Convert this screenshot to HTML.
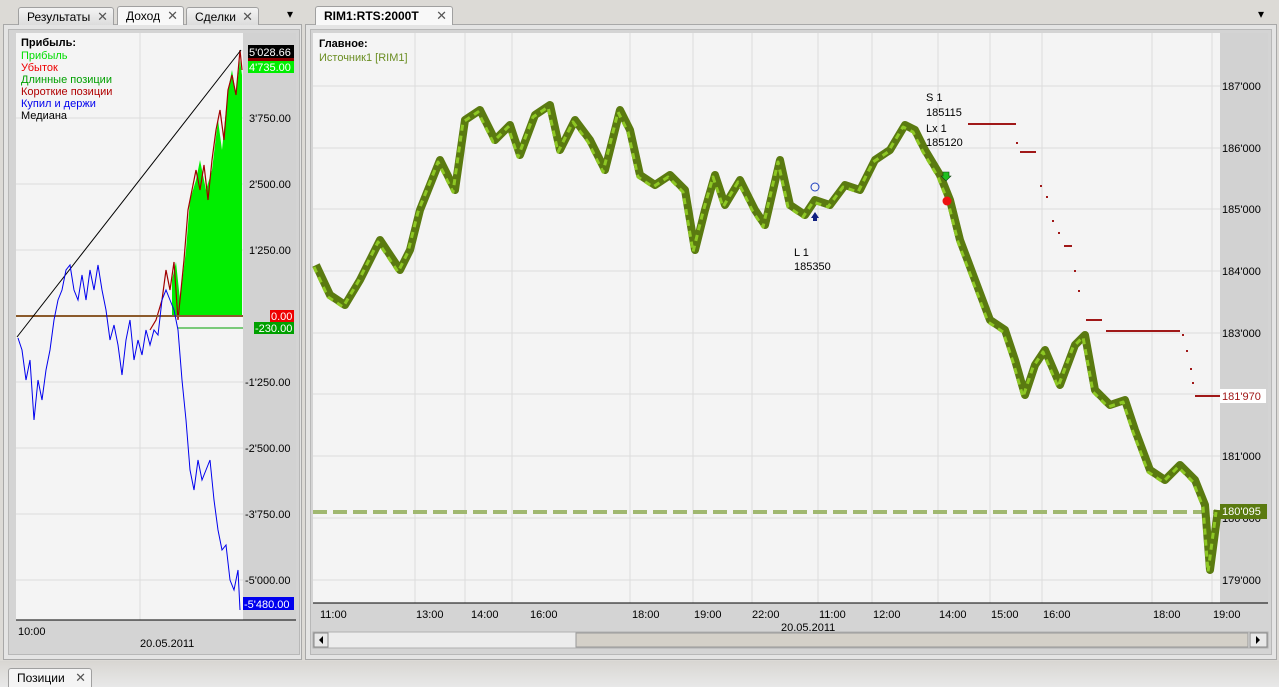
<!DOCTYPE html><html><head><meta charset="utf-8"><style>
body{margin:0;width:1279px;height:687px;background:#dcdad6;font-family:"Liberation Sans",sans-serif;font-size:11px;position:relative;overflow:hidden}
.abs{position:absolute}
.tab{position:absolute;height:18px;border:1px solid #a0a0a0;border-bottom:none;background:linear-gradient(#f4f4f4,#dcdcdc);border-radius:3px 3px 0 0;font-size:12px;line-height:18px;padding-left:8px;box-sizing:border-box}
.x{position:absolute;right:5px;top:0;font-size:13px;color:#555}
.lbl{position:absolute;font-size:11px;color:#000;white-space:nowrap}
</style></head><body>
<div class="abs" style="left:3px;top:24px;width:297px;height:634px;border:1px solid #a8a8a8;background:#e4e4e4"></div>
<div class="abs" style="left:8px;top:29px;width:290px;height:624px;border:1px solid #b8b8b8;background:#d4d4d4"></div>
<div class="tab" style="left:18px;top:7px;width:96px">Результаты<span class="x">✕</span></div>
<div class="tab" style="left:117px;top:6px;width:67px;height:19px;background:#f8f8f8">Доход<span class="x">✕</span></div>
<div class="tab" style="left:186px;top:7px;width:73px">Сделки<span class="x">✕</span></div>
<div class="lbl" style="left:287px;top:7px;font-size:12px">▾</div>
<div class="abs" style="left:305px;top:24px;width:970px;height:634px;border:1px solid #a8a8a8;background:#e4e4e4"></div>
<div class="abs" style="left:310px;top:29px;width:960px;height:624px;border:1px solid #b8b8b8;background:#d4d4d4"></div>
<div class="tab" style="left:315px;top:6px;width:138px;height:19px;background:#f8f8f8;font-weight:bold">RIM1:RTS:2000T<span class="x" style="font-weight:normal">✕</span></div>
<div class="lbl" style="left:1258px;top:7px;font-size:12px">▾</div>
<div class="abs" style="left:0;top:661px;width:1279px;height:26px;background:linear-gradient(#d8d6d2,#e8e8e8)"></div>
<div class="tab" style="left:8px;top:668px;width:84px;height:19px;background:#f4f4f4">Позиции<span class="x">✕</span></div>

<svg class="abs" style="left:0;top:0" width="1279" height="687">
<rect x="16" y="33" width="227" height="587" fill="#f4f4f4"/>
<rect x="243" y="33" width="53" height="587" fill="#d2d2d2"/>
<g stroke="#dcdcdc" stroke-width="1">
<line x1="140" y1="33" x2="140" y2="620"/>
<line x1="16" y1="118" x2="243" y2="118"/><line x1="16" y1="184" x2="243" y2="184"/><line x1="16" y1="250" x2="243" y2="250"/><line x1="16" y1="382" x2="243" y2="382"/><line x1="16" y1="448" x2="243" y2="448"/><line x1="16" y1="514" x2="243" y2="514"/><line x1="16" y1="580" x2="243" y2="580"/>
</g>
<line x1="16" y1="620" x2="296" y2="620" stroke="#000"/>
<polygon points="172,316 172,280 176,262 180,300 186,250 190,200 196,180 200,160 206,190 212,170 218,120 222,150 228,90 232,70 236,95 240,60 242,75 242,316" fill="#00ee00"/>
<polyline points="150,330 156,320 162,300 166,270 170,290 174,262 178,320 184,260 188,210 192,190 196,170 200,190 204,165 208,200 212,160 216,130 220,110 224,140 228,90 232,75 236,95 240,50 242,70" fill="none" stroke="#a00000" stroke-width="1.2"/>
<line x1="16" y1="316" x2="243" y2="316" stroke="#8b5a2b" stroke-width="2"/>
<line x1="178" y1="328" x2="243" y2="328" stroke="#00a000" stroke-width="1"/>
<line x1="17" y1="337" x2="241" y2="50" stroke="#000" stroke-width="1"/>
<polyline points="18,338 22,350 26,380 30,360 34,420 38,380 42,400 46,370 50,350 54,320 58,300 62,290 66,270 70,265 74,290 78,300 82,275 86,300 90,270 94,290 98,265 102,290 106,310 110,340 114,325 118,345 122,375 126,340 130,320 134,360 138,340 142,355 146,330 150,345 154,330 158,335 162,300 166,290 170,300 174,310 178,330 182,380 186,420 190,470 194,490 198,460 202,480 206,470 210,460 214,500 218,530 222,550 226,545 230,580 234,590 238,570 240,610" fill="none" stroke="#0000ee" stroke-width="1"/>
<g font-family="Liberation Sans" font-size="11">
<text x="21" y="46" font-weight="bold">Прибыль:</text>
<text x="21" y="59" fill="#00dd00">Прибыль</text>
<text x="21" y="71" fill="#ee0000">Убыток</text>
<text x="21" y="83" fill="#00a000">Длинные позиции</text>
<text x="21" y="95" fill="#b00000">Короткие позиции</text>
<text x="21" y="107" fill="#0000ee">Купил и держи</text>
<text x="21" y="119">Медиана</text>
<rect x="248" y="45" width="46" height="13" fill="#000"/><text x="249" y="56" fill="#fff">5'028.66</text>
<rect x="248" y="58" width="46" height="3" fill="#8b0000"/>
<rect x="248" y="61" width="46" height="12" fill="#00ee00"/><text x="249" y="71" fill="#fff">4'735.00</text>
<text x="249" y="122">3'750.00</text>
<text x="249" y="188">2'500.00</text>
<text x="249" y="254">1'250.00</text>
<rect x="270" y="310" width="24" height="12" fill="#ee0000"/><text x="271" y="320" fill="#fff">0.00</text>
<rect x="254" y="322" width="40" height="12" fill="#00a000"/><text x="255" y="332" fill="#fff">-230.00</text>
<text x="245" y="386">-1'250.00</text>
<text x="245" y="452">-2'500.00</text>
<text x="245" y="518">-3'750.00</text>
<text x="245" y="584">-5'000.00</text>
<rect x="243" y="597" width="51" height="13" fill="#0000ee"/><text x="244" y="608" fill="#fff">-5'480.00</text>
<text x="18" y="635">10:00</text>
<text x="140" y="647">20.05.2011</text>
</g>
<rect x="313" y="33" width="907" height="570" fill="#f4f4f4"/>
<rect x="1220" y="33" width="48" height="570" fill="#d2d2d2"/>
<g stroke="#dcdcdc" stroke-width="1">
<line x1="313" y1="86" x2="1220" y2="86"/><line x1="313" y1="148" x2="1220" y2="148"/><line x1="313" y1="209" x2="1220" y2="209"/><line x1="313" y1="271" x2="1220" y2="271"/><line x1="313" y1="333" x2="1220" y2="333"/><line x1="313" y1="394" x2="1220" y2="394"/><line x1="313" y1="456" x2="1220" y2="456"/><line x1="313" y1="518" x2="1220" y2="518"/><line x1="313" y1="580" x2="1220" y2="580"/>
<line x1="415" y1="33" x2="415" y2="603"/><line x1="465" y1="33" x2="465" y2="603"/><line x1="512" y1="33" x2="512" y2="603"/><line x1="630" y1="33" x2="630" y2="603"/><line x1="693" y1="33" x2="693" y2="603"/><line x1="752" y1="33" x2="752" y2="603"/><line x1="818" y1="33" x2="818" y2="603"/><line x1="872" y1="33" x2="872" y2="603"/><line x1="938" y1="33" x2="938" y2="603"/><line x1="990" y1="33" x2="990" y2="603"/><line x1="1042" y1="33" x2="1042" y2="603"/><line x1="1152" y1="33" x2="1152" y2="603"/><line x1="1212" y1="33" x2="1212" y2="603"/>
</g>
<line x1="313" y1="603" x2="1268" y2="603" stroke="#000"/>
<line x1="313" y1="512" x2="1220" y2="512" stroke="#a0b870" stroke-width="4" stroke-dasharray="14,6"/>
<polyline points="316,265 330,295 345,305 360,280 380,240 400,270 410,250 420,210 440,160 455,190 465,120 480,110 495,140 510,125 520,155 535,115 550,105 560,150 575,120 590,140 605,170 620,110 630,130 640,175 655,185 670,175 685,190 695,250 705,210 715,175 725,205 740,180 755,210 765,225 780,160 790,205 805,215 815,200 830,205 845,185 860,190 875,160 890,150 905,125 915,130 925,150 940,175 950,200 960,240 975,280 990,320 1005,330 1015,360 1025,395 1035,365 1045,350 1060,385 1075,345 1085,335 1095,390 1110,405 1125,400 1135,430 1150,470 1165,480 1180,465 1195,480 1205,505 1210,570 1218,510" fill="none" stroke="#5a7a10" stroke-width="8" stroke-linejoin="round"/>
<polyline transform="translate(-2,2)" points="316,265 330,295 345,305 360,280 380,240 400,270 410,250 420,210 440,160 455,190 465,120 480,110 495,140 510,125 520,155 535,115 550,105 560,150 575,120 590,140 605,170 620,110 630,130 640,175 655,185 670,175 685,190 695,250 705,210 715,175 725,205 740,180 755,210 765,225 780,160 790,205 805,215 815,200 830,205 845,185 860,190 875,160 890,150 905,125 915,130 925,150 940,175 950,200 960,240 975,280 990,320 1005,330 1015,360 1025,395 1035,365 1045,350 1060,385 1075,345 1085,335 1095,390 1110,405 1125,400 1135,430 1150,470 1165,480 1180,465 1195,480 1205,505 1210,570 1218,510" fill="none" stroke="#8ec824" stroke-width="3" stroke-dasharray="6,5" stroke-linejoin="round"/>
<g stroke="#a01818" stroke-width="2">
<line x1="968" y1="124" x2="1016" y2="124"/><line x1="1020" y1="152" x2="1036" y2="152"/><line x1="1064" y1="246" x2="1072" y2="246"/><line x1="1086" y1="320" x2="1102" y2="320"/><line x1="1106" y1="331" x2="1180" y2="331"/><line x1="1195" y1="396" x2="1220" y2="396"/>
</g>
<g fill="#a01818"><rect x="1016" y="142" width="2" height="2"/><rect x="1040" y="185" width="2" height="2"/><rect x="1046" y="196" width="2" height="2"/><rect x="1052" y="220" width="2" height="2"/><rect x="1058" y="232" width="2" height="2"/><rect x="1074" y="270" width="2" height="2"/><rect x="1078" y="290" width="2" height="2"/><rect x="1182" y="334" width="2" height="2"/><rect x="1186" y="350" width="2" height="2"/><rect x="1190" y="368" width="2" height="2"/><rect x="1192" y="382" width="2" height="2"/></g>
<circle cx="815" cy="187" r="4" fill="none" stroke="#2040c0"/>
<polygon points="811,218 815,212 819,218 817,218 817,221 813,221 813,218" fill="#102080"/>
<polygon points="943,172 949,172 949,176 951,176 946,181 941,176 943,176" fill="#20c020" stroke="#104010" stroke-width="0.6"/>
<circle cx="947" cy="201" r="4.5" fill="#ee1010"/>
<g font-family="Liberation Sans" font-size="11">
<text x="319" y="47" font-weight="bold">Главное:</text>
<text x="319" y="61" fill="#6b8e23">Источник1 [RIM1]</text>
<text x="794" y="256">L 1</text><text x="794" y="270">185350</text>
<text x="926" y="101">S 1</text><text x="926" y="116">185115</text>
<text x="926" y="132">Lx 1</text><text x="926" y="146">185120</text>
<text x="1222" y="90">187'000</text><text x="1222" y="152">186'000</text><text x="1222" y="213">185'000</text><text x="1222" y="275">184'000</text><text x="1222" y="337">183'000</text>
<rect x="1220" y="389" width="46" height="14" fill="#fff"/><text x="1222" y="400" fill="#a01818">181'970</text>
<text x="1222" y="460">181'000</text><text x="1222" y="522">180'000</text><text x="1222" y="584">179'000</text>
<rect x="1220" y="504" width="47" height="15" fill="#5a7a10"/><text x="1222" y="515" fill="#fff">180'095</text>
<text x="320" y="618">11:00</text><text x="416" y="618">13:00</text><text x="471" y="618">14:00</text><text x="530" y="618">16:00</text><text x="632" y="618">18:00</text><text x="694" y="618">19:00</text><text x="752" y="618">22:00</text><text x="819" y="618">11:00</text><text x="873" y="618">12:00</text><text x="939" y="618">14:00</text><text x="991" y="618">15:00</text><text x="1043" y="618">16:00</text><text x="1153" y="618">18:00</text><text x="1213" y="618">19:00</text>
<text x="781" y="631">20.05.2011</text>
</g>
<rect x="313" y="632" width="955" height="16" fill="#ececec" stroke="#b0b0b0"/>
<rect x="314" y="633" width="14" height="14" fill="#e8e8e8" stroke="#888"/><polygon points="323,636 319,640 323,644" fill="#000"/>
<rect x="576" y="633" width="672" height="14" fill="#d4d0c8" stroke="#999"/>
<rect x="1250" y="633" width="17" height="14" fill="#e8e8e8" stroke="#888"/><polygon points="1256,636 1260,640 1256,644" fill="#000"/>
</svg>
</body></html>
